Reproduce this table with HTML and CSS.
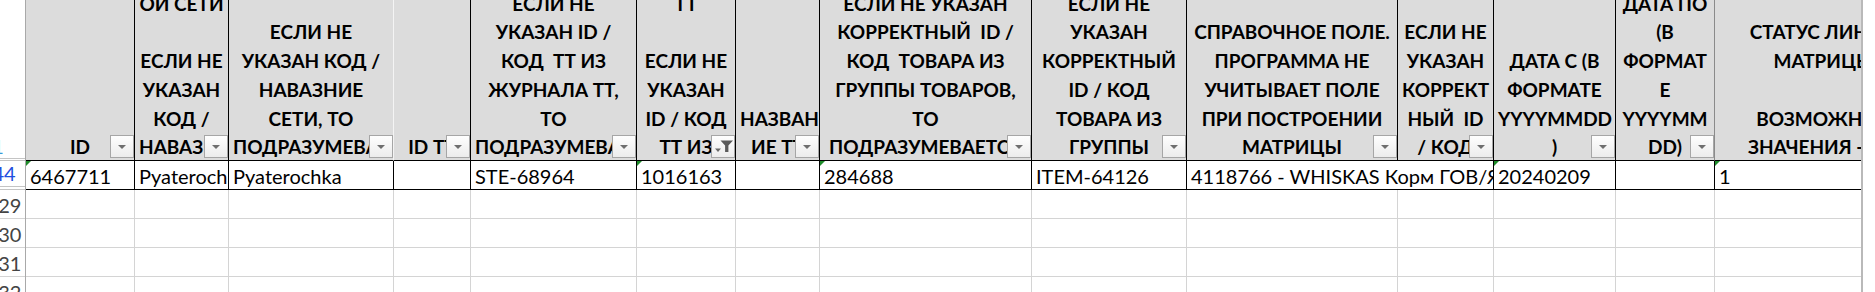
FILE: index.html
```html
<!DOCTYPE html>
<html lang="ru">
<head>
<meta charset="utf-8">
<title>Матрица</title>
<link rel="stylesheet" href="styles.css">
</head>
<body>
<div class="sheet">
  <div class="rowheads">
    <div class="rh rh-head"><span class="n n-head">1</span></div>
    <div class="rh rh-hidden"><span class="n n-blue">44</span></div>
    <div class="rh"><span class="n">129</span></div>
    <div class="rh"><span class="n">130</span></div>
    <div class="rh"><span class="n">131</span></div>
    <div class="rh"><span class="n">132</span></div>
  </div>
  <div class="gridwrap">
    <div class="grid">
      <!-- header row -->
      <div class="c h"><div class="ht">ID</div><span class="dd"></span></div>
      <div class="c h"><div class="ht">ОЙ СЕТИ<br>&nbsp;<br>ЕСЛИ НЕ<br>УКАЗАН<br>КОД /<br>НАВАЗНИЕ</div><span class="dd"></span></div>
      <div class="c h h-light"><div class="ht">ЕСЛИ НЕ<br>УКАЗАН КОД /<br>НАВАЗНИЕ<br>СЕТИ, ТО<br>ПОДРАЗУМЕВАЕТСЯ</div><span class="dd"></span></div>
      <div class="c h"><div class="ht">ID ТТ</div><span class="dd"></span></div>
      <div class="c h"><div class="ht">ЕСЛИ НЕ<br>УКАЗАН ID /<br>КОД&nbsp; ТТ ИЗ<br>ЖУРНАЛА ТТ,<br>ТО<br>ПОДРАЗУМЕВАЕТСЯ</div><span class="dd"></span></div>
      <div class="c h"><div class="ht">ТТ<br>&nbsp;<br>ЕСЛИ НЕ<br>УКАЗАН<br>ID / КОД<br>ТТ ИЗ</div>
        <span class="dd dd-filter"><svg width="22" height="21" viewBox="0 0 22 21"><path d="M3 12.5h6l-3 3.5z" fill="#6a6a6a"/><path d="M8.5 4.5h12.5l-4.6 5v6.5h-3.3v-6.5z" fill="#5a5a5a"/></svg></span></div>
      <div class="c h"><div class="ht">НАЗВАН<br>ИЕ ТТ</div><span class="dd"></span></div>
      <div class="c h"><div class="ht">ЕСЛИ НЕ УКАЗАН<br>КОРРЕКТНЫЙ&nbsp; ID /<br>КОД&nbsp; ТОВАРА ИЗ<br>ГРУППЫ ТОВАРОВ,<br>ТО<br>ПОДРАЗУМЕВАЕТСЯ</div><span class="dd"></span></div>
      <div class="c h"><div class="ht">ЕСЛИ НЕ<br>УКАЗАН<br>КОРРЕКТНЫЙ<br>ID / КОД<br>ТОВАРА ИЗ<br>ГРУППЫ</div><span class="dd"></span></div>
      <div class="c h"><div class="ht">СПРАВОЧНОЕ ПОЛЕ.<br>ПРОГРАММА НЕ<br>УЧИТЫВАЕТ ПОЛЕ<br>ПРИ ПОСТРОЕНИИ<br>МАТРИЦЫ</div><span class="dd"></span></div>
      <div class="c h"><div class="ht">ЕСЛИ НЕ<br>УКАЗАН<br>КОРРЕКТ<br>НЫЙ&nbsp; ID<br>/ КОД</div><span class="dd"></span></div>
      <div class="c h"><div class="ht">ДАТА С (В<br>ФОРМАТЕ<br>YYYYMMDD<br>)</div><span class="dd"></span></div>
      <div class="c h h-grey"><div class="ht">ДАТА ПО<br>(В<br>ФОРМАТ<br>Е<br>YYYYMM<br>DD)</div><span class="dd"></span></div>
      <div class="c h"><div class="ht">СТАТУС ЛИНИИ<br>МАТРИЦЫ<br>&nbsp;<br>ВОЗМОЖНЫЕ<br>ЗНАЧЕНИЯ - 0, 1</div><span class="dd"></span></div>

      <!-- data row 44 -->
      <div class="c d tri">6467711</div>
      <div class="c d">Pyaterochka</div>
      <div class="c d">Pyaterochka</div>
      <div class="c d"></div>
      <div class="c d">STE-68964</div>
      <div class="c d tri">1016163</div>
      <div class="c d"></div>
      <div class="c d tri">284688</div>
      <div class="c d">ITEM-64126</div>
      <div class="c d span2">4118766 - WHISKAS Корм ГОВ/ЯГН 75г</div>
      <div class="c d tri">20240209</div>
      <div class="c d"></div>
      <div class="c d tri">1</div>

      <!-- empty rows -->
      <div class="c e"></div><div class="c e"></div><div class="c e"></div><div class="c e"></div><div class="c e"></div><div class="c e"></div><div class="c e"></div><div class="c e"></div><div class="c e"></div><div class="c e"></div><div class="c e"></div><div class="c e"></div><div class="c e"></div><div class="c e"></div>
      <div class="c e"></div><div class="c e"></div><div class="c e"></div><div class="c e"></div><div class="c e"></div><div class="c e"></div><div class="c e"></div><div class="c e"></div><div class="c e"></div><div class="c e"></div><div class="c e"></div><div class="c e"></div><div class="c e"></div><div class="c e"></div>
      <div class="c e"></div><div class="c e"></div><div class="c e"></div><div class="c e"></div><div class="c e"></div><div class="c e"></div><div class="c e"></div><div class="c e"></div><div class="c e"></div><div class="c e"></div><div class="c e"></div><div class="c e"></div><div class="c e"></div><div class="c e"></div>
      <div class="c e"></div><div class="c e"></div><div class="c e"></div><div class="c e"></div><div class="c e"></div><div class="c e"></div><div class="c e"></div><div class="c e"></div><div class="c e"></div><div class="c e"></div><div class="c e"></div><div class="c e"></div><div class="c e"></div><div class="c e"></div>
    </div>
  </div>
  <div class="edge"></div>
</div>
</body>
</html>
```

FILE: styles.css
```css
* { box-sizing: border-box; }
html, body { margin: 0; padding: 0; background: #fff; }
body { width: 1875px; height: 292px; overflow: hidden; }

.sheet {
  display: flex;
  width: 1875px;
  height: 292px;
  overflow: hidden;
  font-family: "Lato", "Open Sans", "Noto Sans", sans-serif;
  font-size: 19px;
  color: #000;
}

/* row headers */
.rowheads {
  flex: none;
  width: 26px;
  display: flex;
  flex-direction: column;
  border-right: 1px solid #a9a9a9;
}
.rh {
  flex: none;
  height: 29px;
  display: flex;
  justify-content: flex-end;
  align-items: flex-end;
  overflow: hidden;
  border-bottom: 1px solid #d4d4d4;
  color: #444;
  font-size: 20px;
  line-height: 26px;
}
.rh-head { height: 161px; border-bottom: 3px double #c4c4c4; }
.rh-hidden { border-bottom: 4px double #c4c4c4; }
.n { flex: none; width: 42px; text-align: center; }
.n-blue { color: #1f4fe0; }
.n-head { color: #3a9ad8; margin-right: 6px; line-height: 24px; }

/* grid */
.gridwrap {
  flex: none;
  width: 1835px;
  height: 292px;
  overflow: hidden;
}
.grid {
  display: grid;
  grid-template-columns: 109px 94px 165px 77px 166px 99px 84px 212px 155px 211px 96px 122px 99px 218px;
  grid-template-rows: 161px 29px 29px 29px 29px 29px;
  width: 1907px;
}
.c {
  position: relative;
  overflow: hidden;
  border-right: 1px solid #000;
  border-bottom: 1px solid #000;
  white-space: nowrap;
}

/* header cells */
.h {
  background: #dcdcdc;
  display: flex;
  flex-direction: column;
  justify-content: flex-end;
  padding: 0 4px;
}
.h-light { border-right-color: #f4f4f4; }
.h-grey { border-right-color: #8a8a8a; }
.ht {
  font-weight: 700;
  text-align: center;
  line-height: 28.7px;
  margin-bottom: -2px;
}
.dd {
  position: absolute;
  right: 0;
  bottom: 2px;
  width: 24px;
  height: 23px;
  border: 1px solid #a6a6a6;
  background: linear-gradient(#fefefe, #ececec);
}
.dd::after {
  content: "";
  position: absolute;
  left: 7px;
  top: 9px;
  border-left: 4px solid transparent;
  border-right: 4px solid transparent;
  border-top: 4px solid #6e6e6e;
}
.dd-filter::after { display: none; }
.dd-filter svg { display: block; }

/* data row */
.d {
  background: #fff;
  padding: 2px 4px 0;
  font-size: 20px;
  line-height: 27px;
}
.span2 { grid-column: span 2; }
.tri::before {
  content: "";
  position: absolute;
  left: 0;
  top: 0;
  border-top: 5px solid #1e8c2a;
  border-right: 5px solid transparent;
}

/* empty grid rows */
.e {
  border-right-color: #d4d4d4;
  border-bottom-color: #d4d4d4;
}

.edge {
  flex: none;
  width: 14px;
  height: 292px;
  border-left: 2px solid #b9b9b9;
  background: #fff;
}
```
